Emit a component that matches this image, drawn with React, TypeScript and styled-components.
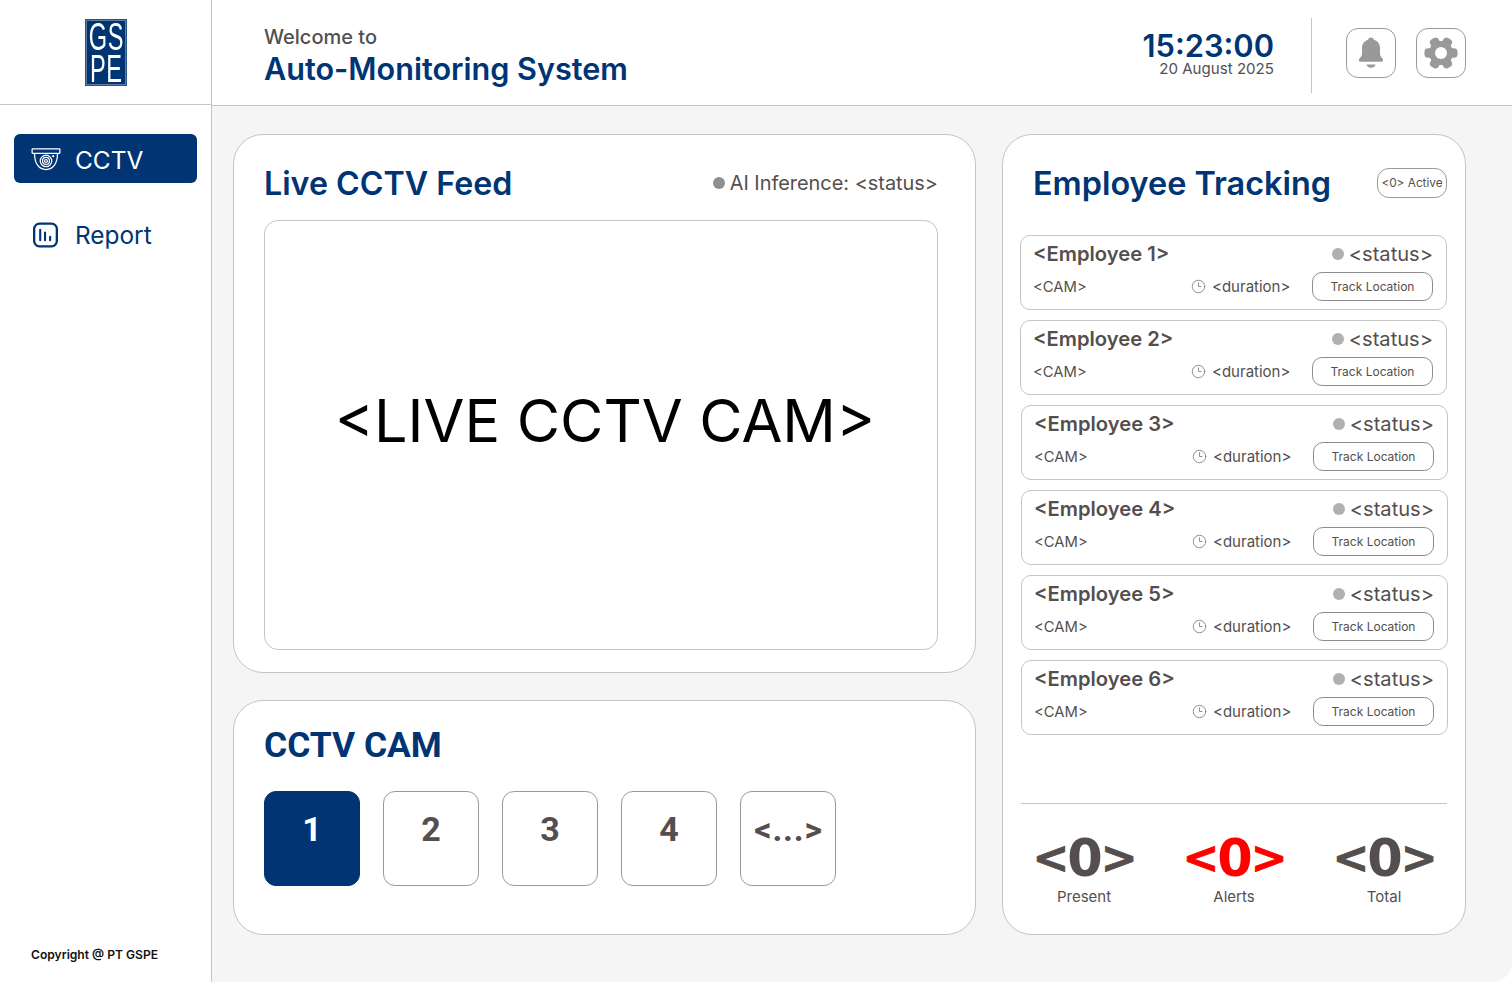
import styled, { createGlobalStyle } from 'styled-components';
import { Clock3 } from 'lucide-react';

const navy = '#003473';
const ink = '#544f4e';

const GlobalStyle = createGlobalStyle`
  * { box-sizing: border-box; }
  html, body { margin: 0; padding: 0; background: #fff; }
  body { font-family: Inter, "Liberation Sans", sans-serif; }
`;

const Page = styled.div`
  width: 1512px;
  height: 982px;
  display: flex;
  overflow: hidden;
  background: #fff;
`;

const Sidebar = styled.aside`
  width: 212px;
  height: 100%;
  flex-shrink: 0;
  display: flex;
  flex-direction: column;
  border-right: 1px solid #c4c4c4;
  background: #fff;
`;

const LogoBar = styled.div`
  height: 105px;
  padding-left: 85px;
  padding-top: 19px;
  border-bottom: 1px solid #c4c4c4;
`;

const Logo = styled.div`
  width: 42px;
  height: 67px;
  background: ${navy};
  border: 2px solid #5d7ba3;
  outline: 1px solid #2d5185;
  outline-offset: -1px;
  display: flex;
  flex-direction: column;
  align-items: center;
  color: #fff;
  font-family: "Liberation Sans", sans-serif;
`;

const LogoLine = styled.span`
  display: block;
  width: max-content;
  font-size: 38px;
  line-height: 31px;
  height: 31px;
  margin-top: 1px;
  letter-spacing: 1px;
  transform: scaleX(0.62);
  white-space: nowrap;
`;

const Nav = styled.nav`
  padding: 29px 14px 0;
  display: flex;
  flex-direction: column;
  gap: 27px;
`;

const NavItem = styled.div<{ $active?: boolean }>`
  height: 49px;
  width: 183px;
  padding-left: ${(p) => (p.$active ? 17 : 19)}px;
  padding-top: ${(p) => (p.$active ? 2 : 0)}px;
  display: flex;
  align-items: center;
  gap: ${(p) => (p.$active ? 14 : 17)}px;
  border-radius: 6px;
  font-size: 24.4px;
  background: ${(p) => (p.$active ? navy : 'transparent')};
  color: ${(p) => (p.$active ? '#fff' : navy)};
`;

const Copyright = styled.div`
  margin-top: auto;
  padding: 0 0 20px 31px;
  font-size: 12.1px;
  line-height: 15px;
  font-weight: 600;
  color: #111;
`;

const Main = styled.div`
  flex: 1;
  display: flex;
  flex-direction: column;
  min-width: 0;
`;

const Header = styled.header`
  height: 106px;
  flex-shrink: 0;
  display: flex;
  align-items: center;
  padding: 0 46px 0 52px;
  border-bottom: 1px solid #c4c4c4;
`;

const Welcome = styled.div`
  flex: 1;
  padding-top: 7px;
`;

const WelcomeSmall = styled.div`
  font-size: 20px;
  line-height: 24px;
  font-weight: 500;
  color: ${ink};
  margin-bottom: 2px;
  padding-top: 1px;
`;

const WelcomeTitle = styled.h1`
  margin: -1px 0 0;
  font-size: 30.6px;
  line-height: 38px;
  font-weight: 600;
  color: ${navy};
`;

const Clock = styled.div`
  text-align: right;
  padding-right: 37px;
  margin-right: 34px;
  height: 75px;
  margin-top: 5px;
  border-right: 1px solid #c4c4c4;
  padding-top: 12px;
`;

const Time = styled.div`
  font-size: 30.8px;
  line-height: 32px;
  font-weight: 600;
  color: ${navy};
`;

const DateText = styled.div`
  font-size: 15.1px;
  line-height: 14px;
  color: ${ink};
`;

const IconButton = styled.button`
  width: 50px;
  height: 50px;
  margin-left: 20px;
  padding: 0;
  display: flex;
  align-items: center;
  justify-content: center;
  background: #fff;
  border: 1px solid #9a9a9a;
  border-radius: 12px;
  &:first-of-type { margin-left: 0; }
`;

const Content = styled.div`
  flex: 1;
  display: flex;
  gap: 26px;
  padding: 28px 46px 47px 21px;
  background: #f5f5f5;
  border-bottom-right-radius: 20px;
`;

const LeftColumn = styled.div`
  width: 743px;
  display: flex;
  flex-direction: column;
  gap: 27px;
`;

const Card = styled.section`
  background: #fff;
  border: 1px solid #c4c4c4;
  border-radius: 30px;
`;

const FeedCard = styled(Card)`
  height: 539px;
  padding: 30px 37px 22px 30px;
`;

const FeedHead = styled.div`
  display: flex;
  align-items: center;
  justify-content: space-between;
  height: 38px;
  margin-bottom: 17px;
`;

const CardTitle = styled.h2`
  margin: 0;
  font-size: 32.2px;
  line-height: 38px;
  font-weight: 600;
  color: ${navy};
`;

const Inference = styled.div`
  display: flex;
  align-items: center;
  gap: 5px;
  padding-bottom: 2px;
  font-size: 19.9px;
  color: ${ink};
`;

const Dot = styled.span<{ $color: string; $size: number }>`
  width: ${(p) => p.$size}px;
  height: ${(p) => p.$size}px;
  border-radius: 50%;
  background: ${(p) => p.$color};
`;

const VideoFrame = styled.div`
  height: 430px;
  width: 674px;
  border: 1px solid #c4c4c4;
  border-radius: 14px;
  display: flex;
  align-items: center;
  justify-content: center;
  padding: 0 0 30px 8px;
  font-size: 59.3px;
  color: #000;
`;

const CamCard = styled(Card)`
  height: 235px;
  padding: 25px 30px;
`;

const CamTitle = styled.h2`
  margin: 0 0 27px;
  font-family: Roboto, "Liberation Sans", sans-serif;
  font-size: 35.4px;
  line-height: 38px;
  font-weight: 700;
  color: ${navy};
`;

const CamRow = styled.div`
  display: flex;
  gap: 23px;
`;

const CamButton = styled.div<{ $active?: boolean }>`
  width: 96px;
  height: 95px;
  padding: 16px 0 0 1px;
  text-align: center;
  font-family: Roboto, "Liberation Sans", sans-serif;
  font-size: 34px;
  line-height: 42px;
  font-weight: 700;
  letter-spacing: 0.8px;
  border-radius: 12px;
  border: 1px solid ${(p) => (p.$active ? navy : '#9a9a9a')};
  background: ${(p) => (p.$active ? navy : '#fff')};
  color: ${(p) => (p.$active ? '#fff' : ink)};
`;

const TrackCard = styled(Card)`
  width: 464px;
  padding: 33px 18px 0 17px;
  display: flex;
  flex-direction: column;
`;

const TrackHead = styled.div`
  display: flex;
  align-items: center;
  justify-content: space-between;
  height: 32px;
  padding-left: 13px;
  margin-bottom: 35px;
`;

const TrackTitle = styled.h2`
  margin: 0;
  font-size: 32.4px;
  line-height: 32px;
  font-weight: 600;
  color: ${navy};
  white-space: nowrap;
`;

const ActivePill = styled.div`
  width: 70px;
  height: 30px;
  margin-bottom: 2px;
  display: flex;
  align-items: center;
  justify-content: center;
  font-size: 11.8px;
  color: ${ink};
  border: 1px solid #9a9a9a;
  border-radius: 12px;
  white-space: nowrap;
`;

const RowList = styled.div`
  display: flex;
  flex-direction: column;
  gap: 10px;
`;

const EmployeeRow = styled.div<{ $shift?: boolean }>`
  width: 427px;
  height: 75px;
  margin-left: ${(p) => (p.$shift ? 1 : 0)}px;
  padding: 5px 13px 0 12px;
  border: 1px solid #c4c4c4;
  border-radius: 10px;
`;

const RowLine = styled.div`
  display: flex;
  align-items: center;
  justify-content: space-between;
`;

const EmployeeName = styled.div`
  font-size: 20.2px;
  line-height: 26px;
  font-weight: 600;
  color: ${ink};
`;

const StatusText = styled.div`
  display: flex;
  align-items: center;
  gap: 5px;
  font-size: 20.1px;
  line-height: 26px;
  color: ${ink};
`;

const DetailLine = styled(RowLine)`
  margin-top: 5px;
  height: 29px;
`;

const CamLabel = styled.div`
  width: 158px;
  font-size: 14.8px;
  color: ${ink};
`;

const Duration = styled.div`
  flex: 1;
  display: flex;
  align-items: center;
  gap: 6px;
  font-size: 15px;
  color: ${ink};
`;

const TrackButton = styled.div`
  width: 121px;
  height: 29px;
  display: flex;
  align-items: center;
  justify-content: center;
  font-size: 12px;
  color: ${ink};
  border: 1px solid #8e8e8e;
  border-radius: 10px;
`;

const Totals = styled.div`
  margin-top: auto;
  margin-left: 1px;
  height: 131px;
  border-top: 1px solid #c4c4c4;
  display: flex;
  justify-content: space-between;
  padding-top: 26px;
`;

const TotalItem = styled.div`
  width: 126px;
  text-align: center;
`;

const TotalValue = styled.div<{ $alert?: boolean }>`
  height: 57px;
  font-family: "DejaVu Sans", sans-serif;
  font-size: 51px;
  line-height: 56px;
  font-weight: 700;
  letter-spacing: -2px;
  color: ${(p) => (p.$alert ? '#ff0000' : ink)};
`;

const Bracket = styled.span`
  font-size: 44px;
  vertical-align: 3px;
  -webkit-text-stroke: 0.8px currentColor;
`;

const TotalLabel = styled.div`
  font-size: 15px;
  line-height: 20px;
  color: ${ink};
`;

function DomeCamera() {
  return (
    <svg width="30" height="23" viewBox="0 0 31 24" fill="none" stroke="#fff" strokeWidth="1.3">
      <rect x="1" y="1" width="29" height="4.5" rx="0.5" />
      <path d="M3.5 5.5C3.5 16 8 22.5 15.5 22.5S27.5 16 27.5 5.5" />
      <circle cx="15.5" cy="13.5" r="6" />
      <circle cx="15.5" cy="13.5" r="3.6" />
      <circle cx="15.5" cy="13.5" r="1.5" />
      <circle cx="23" cy="8.5" r="0.5" fill="#fff" />
    </svg>
  );
}

function ReportIcon() {
  return (
    <svg width="25" height="26" viewBox="0 0 26 26" fill="none" stroke={navy} strokeLinecap="round">
      <rect x="1.2" y="1.2" width="23.6" height="23.6" rx="5.5" strokeWidth="2.4" />
      <path d="M7.5 7.5V18.5M12.5 10.5V18.5" strokeWidth="2.2" />
      <path d="M17.8 15V18.5" strokeWidth="2.2" />
    </svg>
  );
}

function BellIcon() {
  return (
    <svg width="26" height="32" viewBox="0 0 26 32" fill="#999">
      <path d="M13 .5c1.4 0 2.5.9 2.8 2.2 3.9 1.1 6.2 4.2 6.2 8.3v5.5c0 2 .9 3.4 2.5 5 1.3 1.2.6 3.3-1.2 3.3H2.7c-1.8 0-2.5-2.1-1.2-3.3 1.6-1.6 2.5-3 2.5-5V11c0-4.1 2.3-7.2 6.2-8.3C10.5 1.4 11.6.5 13 .5z" />
      <path d="M8.5 27.5h9c-.5 2.2-2.4 3.2-4.5 3.2s-4-1-4.5-3.2z" />
    </svg>
  );
}

function GearIcon() {
  const lobes = [30, 90, 150, 210, 270, 330];
  return (
    <svg width="34" height="34" viewBox="0 0 34 34" fill="#999">
      <mask id="gear-hole">
        <rect width="34" height="34" fill="#fff" />
        <circle cx="17" cy="17" r="6" fill="#000" />
      </mask>
      <g mask="url(#gear-hole)">
        <circle cx="17" cy="17" r="12" />
        {lobes.map((a) => (
          <rect key={a} x="12.2" y="0.5" width="9.6" height="12" rx="3.6" transform={`rotate(${a} 17 17)`} />
        ))}
      </g>
    </svg>
  );
}

const employees = [1, 2, 3, 4, 5, 6];
const cams = ['1', '2', '3', '4', '<...>'];
const totals = [
  { label: 'Present', alert: false },
  { label: 'Alerts', alert: true },
  { label: 'Total', alert: false },
];

export default function App() {
  return (
    <Page>
      <GlobalStyle />
      <Sidebar>
        <LogoBar>
          <Logo>
            <LogoLine>GS</LogoLine>
            <LogoLine>PE</LogoLine>
          </Logo>
        </LogoBar>
        <Nav>
          <NavItem $active>
            <DomeCamera />
            CCTV
          </NavItem>
          <NavItem>
            <ReportIcon />
            Report
          </NavItem>
        </Nav>
        <Copyright>Copyright @ PT GSPE</Copyright>
      </Sidebar>
      <Main>
        <Header>
          <Welcome>
            <WelcomeSmall>Welcome to</WelcomeSmall>
            <WelcomeTitle>Auto-Monitoring System</WelcomeTitle>
          </Welcome>
          <Clock>
            <Time>15:23:00</Time>
            <DateText>20 August 2025</DateText>
          </Clock>
          <IconButton>
            <BellIcon />
          </IconButton>
          <IconButton>
            <GearIcon />
          </IconButton>
        </Header>
        <Content>
          <LeftColumn>
            <FeedCard>
              <FeedHead>
                <CardTitle>Live CCTV Feed</CardTitle>
                <Inference>
                  <Dot $color="#8f8f8f" $size={12} />
                  AI Inference: {'<status>'}
                </Inference>
              </FeedHead>
              <VideoFrame>{'<LIVE CCTV CAM>'}</VideoFrame>
            </FeedCard>
            <CamCard>
              <CamTitle>CCTV CAM</CamTitle>
              <CamRow>
                {cams.map((c, i) => (
                  <CamButton key={c} $active={i === 0}>
                    {c}
                  </CamButton>
                ))}
              </CamRow>
            </CamCard>
          </LeftColumn>
          <TrackCard>
            <TrackHead>
              <TrackTitle>Employee Tracking</TrackTitle>
              <ActivePill>{'<0> Active'}</ActivePill>
            </TrackHead>
            <RowList>
              {employees.map((n) => (
                <EmployeeRow key={n} $shift={n > 2}>
                  <RowLine>
                    <EmployeeName>{`<Employee ${n}>`}</EmployeeName>
                    <StatusText>
                      <Dot $color="#b0b0b0" $size={12} />
                      {'<status>'}
                    </StatusText>
                  </RowLine>
                  <DetailLine>
                    <CamLabel>{'<CAM>'}</CamLabel>
                    <Duration>
                      <Clock3 size={15} color="#8a8a8a" strokeWidth={1.5} />
                      {'<duration>'}
                    </Duration>
                    <TrackButton>Track Location</TrackButton>
                  </DetailLine>
                </EmployeeRow>
              ))}
            </RowList>
            <Totals>
              {totals.map((t) => (
                <TotalItem key={t.label}>
                  <TotalValue $alert={t.alert}>
                    <Bracket>{'<'}</Bracket>0<Bracket>{'>'}</Bracket>
                  </TotalValue>
                  <TotalLabel>{t.label}</TotalLabel>
                </TotalItem>
              ))}
            </Totals>
          </TrackCard>
        </Content>
      </Main>
    </Page>
  );
}
